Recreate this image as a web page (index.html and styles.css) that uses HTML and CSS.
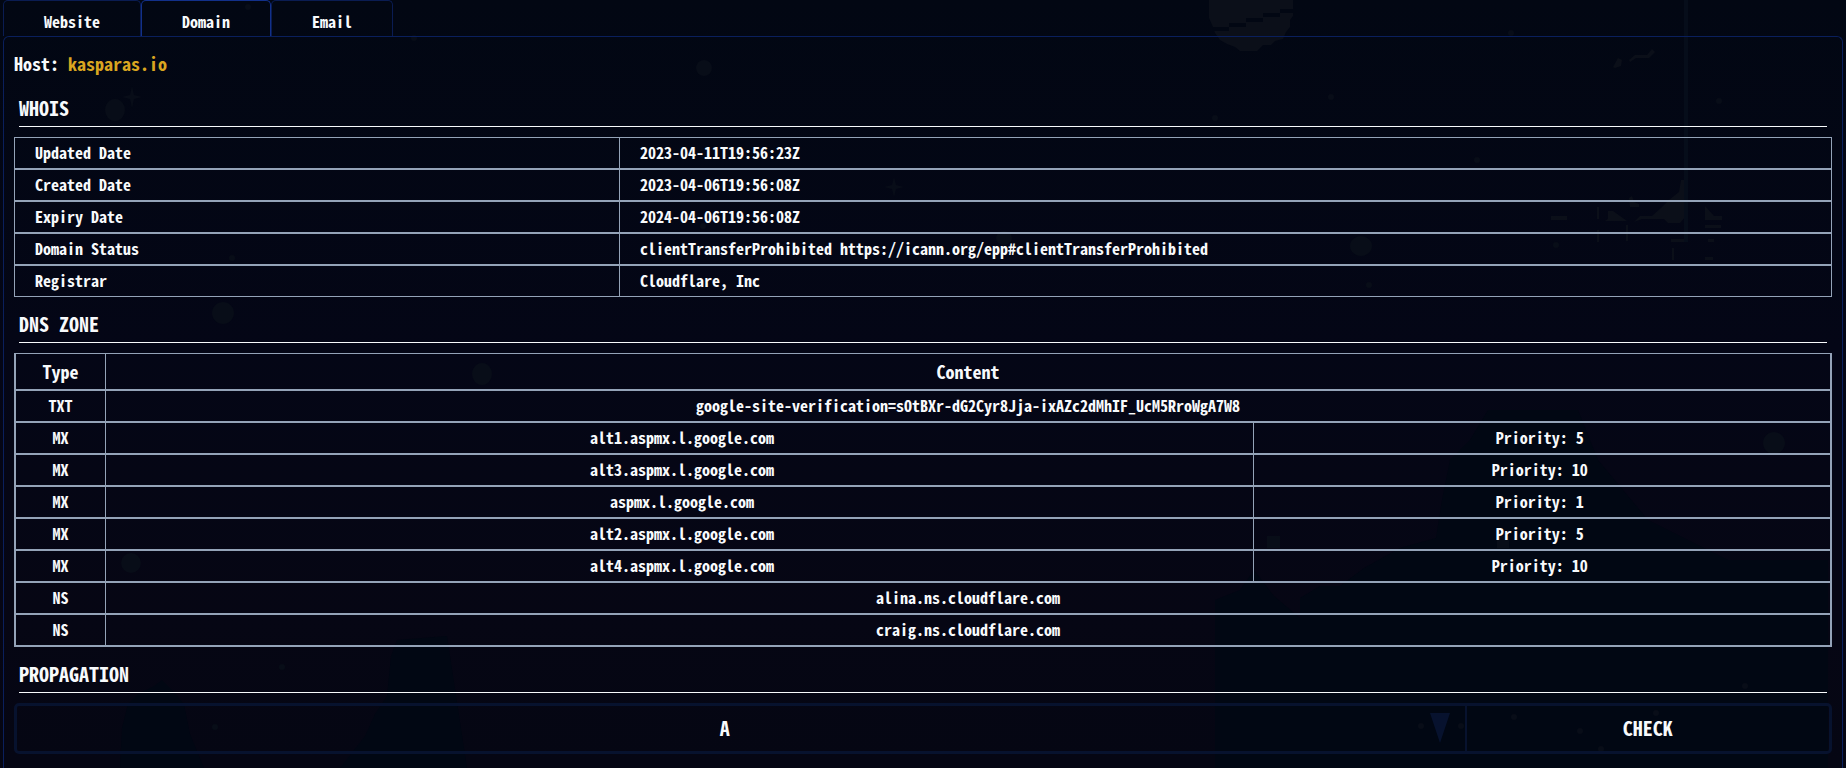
FILE: index.html
```html
<!DOCTYPE html>
<html lang="en">
<head>
<meta charset="utf-8">
<title>Domain lookup</title>
<link rel="stylesheet" href="styles.css">
</head>
<body>
<svg class="sky" viewBox="0 0 1846 768" preserveAspectRatio="xMidYMin slice" aria-hidden="true">
  <g class="sky-land">
    <path d="M120 768l2-40 6-24 10-10 16-8 8-6 10 10 12 14 6 30 14 34z"/>
    <path d="M340 768l25-32 10-22 12-18 4-40 6-16 50-4 20 132z"/>
    <path d="M1215 600l25-10 14-20 20 26 26 22v-20l20-12h20l24-18 36-20 36-10 6-38 8-40 20-20 18-30h90l20 50 50 60 80 40h100v208h-613z"/>
  </g>
  <g class="sky-moon">
    <path d="M1209 0h84v16l-3 4v7l-4 5-3 7-8 2-4 4h-8l-6 6h-17l-5-4-8-3-7-4-5-7-2-6-4-9z"/>
    <path d="M1613 67l5-9 4 2-1 6-6 2zM1629 60l6-5h12l5-6 3 3-6 6h-13l-6 4z"/>
    <path d="M1629 198l3-2 2 6 5 2v3h-9zM1551 216h16v4h-16zM1605 221h22l-14-10h-5v8zM1634 222l6-6h12l9-8 8-8 10-8 2-12h5v36l-6 7h-12l-4-4h-22zM1705 206l9 10h8v4h-17zM1705 225h16v3h-16zM1671 239h16v3h-16zM1708 239h6v3h-6z"/>
    <path d="M1672 248h2v12h-2zM1705 257h8v3h-8zM1597 207h2v12h-2zM1597 230h2v12h-2zM1626 225h2v16h-2z"/>
  </g>
  <path class="sky-gap" d="M1213 27h16v4h-16zM1229 23h17v4h-17zM1246 18h17v4h-17zM1263 13h17v4h-17zM1280 9h14v4h-14z"/>
  <path class="sky-faint" d="M1684 0h4v242h-4z"/>
  <g class="sky-dots">
    <ellipse cx="115" cy="110" rx="10" ry="11"/>
    <path d="M132 86l2 9 8 2-8 2-2 9-2-9-8-2 8-2z"/>
    <path d="M894 177l2 8 8 2-8 2-2 8-2-8-8-2 8-2z"/>
    <ellipse cx="223" cy="313" rx="11" ry="11"/>
    <ellipse cx="482" cy="374" rx="10" ry="11"/>
    <ellipse cx="131" cy="563" rx="10" ry="10"/>
    <ellipse cx="1361" cy="246" rx="11" ry="10"/>
    <ellipse cx="1774" cy="443" rx="11" ry="11"/>
    <ellipse cx="704" cy="68" rx="8" ry="8"/>
    <ellipse cx="1004" cy="238" rx="8" ry="7"/>
    <circle cx="248" cy="7" r="3"/><circle cx="414" cy="38" r="3"/>
    <circle cx="1511" cy="33" r="3"/><circle cx="1331" cy="97" r="3"/>
    <circle cx="1215" cy="118" r="3"/><circle cx="1477" cy="160" r="3"/>
    <circle cx="1719" cy="101" r="3"/><circle cx="1556" cy="245" r="3"/>
    <circle cx="1369" cy="285" r="3"/><circle cx="232" cy="258" r="3"/>
    <circle cx="703" cy="226" r="3"/><circle cx="282" cy="667" r="3"/>
    <circle cx="215" cy="727" r="3"/><circle cx="1514" cy="717" r="3"/>
    <circle cx="1601" cy="749" r="3"/><circle cx="1745" cy="686" r="3"/>
    <circle cx="1421" cy="726" r="3"/><circle cx="1461" cy="726" r="3"/>
    <circle cx="1580" cy="731" r="3"/><circle cx="1656" cy="713" r="3"/>
    <path d="M1267 536h13v12h-13zM1497 536h12v12h-12z"/>
  </g>
</svg>
<main class="app">
  <nav class="tabs" aria-label="Lookup type">
    <button class="tab" type="button">Website</button>
    <button class="tab tab-active" type="button" aria-current="page">Domain</button>
    <button class="tab" type="button">Email</button>
  </nav>
  <section class="panel">
    <p class="host">Host: <span class="host-name">kasparas.io</span></p>

    <h2 class="title">WHOIS</h2>
    <table class="grid whois">
      <colgroup><col class="whois-key"><col></colgroup>
      <tbody>
        <tr><th scope="row">Updated Date</th><td>2023-04-11T19:56:23Z</td></tr>
        <tr><th scope="row">Created Date</th><td>2023-04-06T19:56:08Z</td></tr>
        <tr><th scope="row">Expiry Date</th><td>2024-04-06T19:56:08Z</td></tr>
        <tr><th scope="row">Domain Status</th><td>clientTransferProhibited https://icann.org/epp#clientTransferProhibited</td></tr>
        <tr><th scope="row">Registrar</th><td>Cloudflare, Inc</td></tr>
      </tbody>
    </table>

    <h2 class="title">DNS ZONE</h2>
    <table class="grid zone">
      <colgroup><col class="zone-type"><col><col class="zone-priority"></colgroup>
      <thead>
        <tr><th scope="col">Type</th><th scope="col" colspan="2">Content</th></tr>
      </thead>
      <tbody>
        <tr><td>TXT</td><td colspan="2">google-site-verification=sOtBXr-dG2Cyr8Jja-ixAZc2dMhIF_UcM5RroWgA7W8</td></tr>
        <tr><td>MX</td><td class="mail">alt1.aspmx.l.google.com</td><td class="priority">Priority: 5</td></tr>
        <tr><td>MX</td><td class="mail">alt3.aspmx.l.google.com</td><td class="priority">Priority: 10</td></tr>
        <tr><td>MX</td><td class="mail">aspmx.l.google.com</td><td class="priority">Priority: 1</td></tr>
        <tr><td>MX</td><td class="mail">alt2.aspmx.l.google.com</td><td class="priority">Priority: 5</td></tr>
        <tr><td>MX</td><td class="mail">alt4.aspmx.l.google.com</td><td class="priority">Priority: 10</td></tr>
        <tr><td>NS</td><td colspan="2">alina.ns.cloudflare.com</td></tr>
        <tr><td>NS</td><td colspan="2">craig.ns.cloudflare.com</td></tr>
      </tbody>
    </table>

    <h2 class="title">PROPAGATION</h2>
    <form class="lookup">
      <div class="picker">
        <select class="record" aria-label="Record type"><option>A</option></select>
        <svg class="arrow" viewBox="0 0 20 30" aria-hidden="true"><path d="M0 0h20L10 30z"/></svg>
      </div>
      <button class="check" type="button">CHECK</button>
    </form>
  </section>
</main>
</body>
</html>
```

FILE: styles.css
```css
* {
  box-sizing: border-box;
}

body {
  margin: 0;
  background: linear-gradient(#020713, #040616 45%, #060614 80%, #050613);
  color: #f8fafc;
  font: bold 16px/22px "Noto Sans Mono CJK JP", "DejaVu Sans Mono", monospace;
  min-height: 100vh;
  overflow: hidden;
}

button,
select {
  font: inherit;
  color: inherit;
  background: none;
  border: 0;
  border-radius: 0;
}

.sky {
  position: absolute;
  top: 0;
  left: 0;
  width: 100%;
  height: 100vh;
}

.sky-land { fill: #010713; }
.sky-moon { fill: #0b0f19; }
.sky-gap { fill: #020713; }
.sky-faint { fill: #060d1a; }
.sky-dots { fill: #080d18; }

.app {
  position: relative;
  height: 100vh;
  padding: 0 3px;
  display: flex;
  flex-direction: column;
}

.tabs {
  display: flex;
}

.tab {
  height: 36px;
  padding: 5px 40px 0;
  border: 1px solid #0a1c52;
  border-bottom: 0;
  border-radius: 5px 5px 0 0;
}

.tab-active {
  border-color: #12308a;
}

.panel {
  flex: 1;
  padding: 14px 10px 0;
  border: 1px solid #0a1f5c;
  border-bottom: 0;
  border-radius: 6px 6px 0 0;
}

.host {
  margin: 0;
  font-size: 18px;
  line-height: 24px;
}

.host-name {
  color: #daa520;
}

.title {
  margin: 11px 5px 10px;
  padding: 3px 0 5px;
  border-bottom: 1px solid #f8fafc;
  font-size: 20px;
  line-height: 26px;
}

.host + .title {
  margin-top: 17px;
}

.grid {
  width: 100%;
  table-layout: fixed;
  border-collapse: separate;
  border-spacing: 0;
}

.grid th,
.grid td {
  height: 32px;
  padding: 0 20px 2px;
  border: 1px solid #94a3b8;
  text-align: left;
}

.grid th + td,
.grid th + th,
.grid td + td {
  border-left: 0;
}

.whois-key { width: 33.333%; }
.zone-type { width: 5%; }
.zone-priority { width: 31.75%; }

.zone {
  border: 1px solid #94a3b8;
  border-top: 0;
}

.zone th,
.zone td {
  padding: 0 0 2px;
  text-align: center;
}

.zone th {
  height: 37px;
  font-size: 18px;
}

.zone .mail { padding-left: 5px; }
.zone .priority { padding-right: 5px; }

.lookup {
  display: flex;
  height: 51px;
  border: 3px solid #07122e;
  border-radius: 5px;
  font-size: 20px;
}

.picker {
  position: relative;
  flex: 0 0 80%;
  border-right: 2px solid #07122e;
}

.record {
  width: 100%;
  height: 100%;
  padding: 0 32px 2px 0;
  appearance: none;
  text-align: center;
  text-align-last: center;
}

.arrow {
  position: absolute;
  top: 7px;
  right: 15px;
  width: 20px;
  height: 30px;
  fill: #07122e;
  pointer-events: none;
}

.check {
  flex: 1;
  padding: 0 0 2px;
}
```
